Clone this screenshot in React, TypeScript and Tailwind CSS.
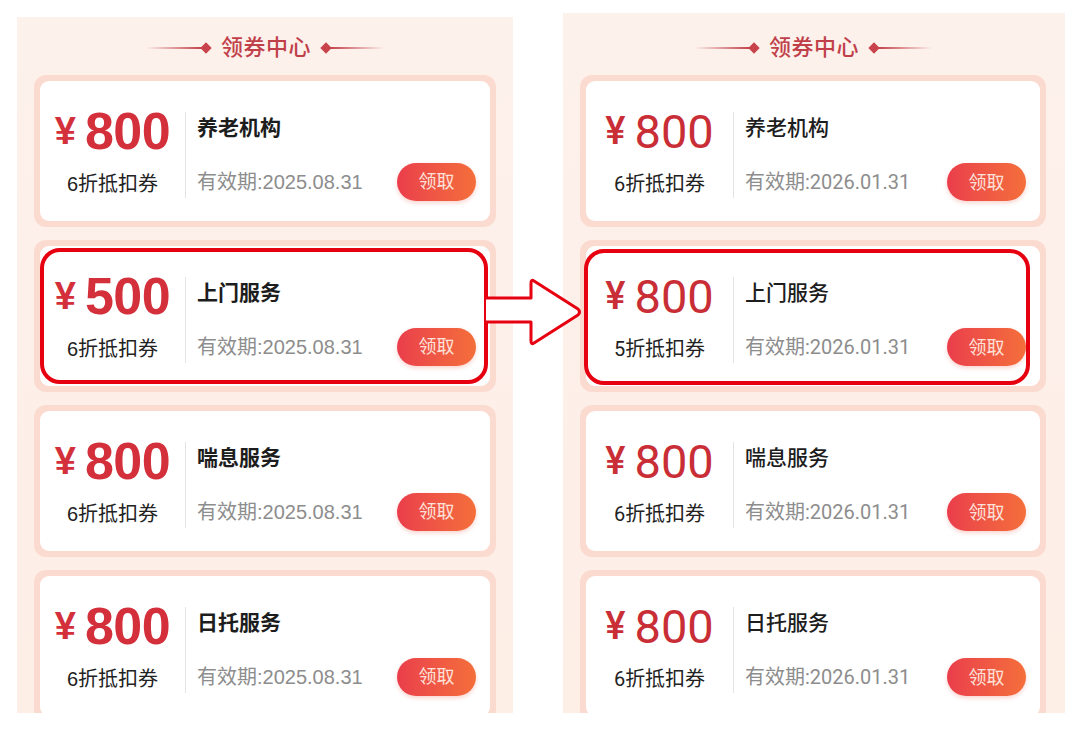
import React from 'react';

/* ─── Data ─── */

interface Coupon {
  price: number;
  discount: number;
  name: string;
  highlight?: boolean;
}

const before: Coupon[] = [
  { price: 800, discount: 6, name: '养老机构' },
  { price: 500, discount: 6, name: '上门服务', highlight: true },
  { price: 800, discount: 6, name: '喘息服务' },
  { price: 800, discount: 6, name: '日托服务' },
];

const after: Coupon[] = [
  { price: 800, discount: 6, name: '养老机构' },
  { price: 800, discount: 5, name: '上门服务', highlight: true },
  { price: 800, discount: 6, name: '喘息服务' },
  { price: 800, discount: 6, name: '日托服务' },
];

type Variant = 'old' | 'new';

/* ─── Pieces ─── */

function Title() {
  return (
    <div className="flex h-[40px] items-center justify-center">
      <div className="h-[2px] w-[56px] bg-linear-to-r from-transparent to-[#c2414a]" />
      <div className="h-[8px] w-[8px] rotate-45 bg-[#c8434b]" />
      <span className="mx-[11px] text-[22px] font-medium leading-none tracking-[0.5px] text-[#c0404a]">
        领券中心
      </span>
      <div className="h-[8px] w-[8px] rotate-45 bg-[#c8434b]" />
      <div className="h-[2px] w-[54px] bg-linear-to-r from-[#c2414a] to-transparent" />
    </div>
  );
}

function CouponCard({ coupon, date, variant }: { coupon: Coupon; date: string; variant: Variant }) {
  const isOld = variant === 'old';
  return (
    <div className="relative h-[152px] shrink-0 rounded-[12px] bg-[#fbdbcf] p-[6px]">
      <div className="flex h-full rounded-[9px] bg-white">
        {/* Left: amount */}
        <div className={`flex flex-col items-center pt-[26px] ${isOld ? 'w-[145px]' : 'w-[147px]'}`}>
          <div className={`flex h-[48px] items-center ${isOld ? 'text-[#d3303b]' : 'text-[#c92e37]'}`}>
            <span className={`mr-[9px] text-[38px] leading-none ${isOld ? 'font-bold' : 'font-medium'}`}>¥</span>
            <span
              className={
                isOld
                  ? 'text-[52px] font-bold leading-none tracking-[-0.5px]'
                  : 'text-[47px] font-normal leading-none'
              }
            >
              {coupon.price}
            </span>
          </div>
          <div className="mt-[17px] text-[20px] leading-[24px] text-[#222]">{coupon.discount}折抵扣券</div>
        </div>

        <div className="mt-[31px] h-[86px] w-px bg-[#e4e4e4]" />

        {/* Right: info */}
        <div className="flex flex-1 flex-col pl-[11px] pr-[14px] pt-[33px]">
          <div
            className={`text-[21px] leading-[28px] text-[#1d1d1d] ${isOld ? 'font-semibold' : 'font-medium'}`}
          >
            {coupon.name}
          </div>
          <div className="mt-[21px] flex items-center justify-between">
            <span className="text-[20px] text-[#8d8d8d]">有效期:{date}</span>
            <button className="flex h-[38px] w-[79px] items-center justify-center rounded-full bg-linear-to-r from-[#ea3d4b] to-[#f46e3a] text-[18px] text-[#fde2da] shadow-[0_2px_4px_rgba(230,80,60,0.25)]">
              领取
            </button>
          </div>
        </div>
      </div>

      {coupon.highlight && (
        <div
          className={`pointer-events-none absolute rounded-[20px] border-[4px] border-[#e60010] ${
            isOld ? 'bottom-[8px] left-[6px] right-[8px] top-[8px]' : 'bottom-[7px] left-[4px] right-[16px] top-[9px]'
          }`}
        />
      )}
    </div>
  );
}

function Panel({ coupons, date, variant }: { coupons: Coupon[]; date: string; variant: Variant }) {
  const isOld = variant === 'old';
  return (
    <div
      className={`overflow-hidden bg-linear-to-b from-[#fdf1ec] to-[#fdeee6] ${
        isOld
          ? 'mt-[17px] h-[696px] w-[496px] pl-[17px] pr-[17px] pt-[11px] font-["Liberation_Sans","Noto_Sans_CJK_SC",sans-serif]'
          : 'mt-[13px] h-[700px] w-[502px] pl-[17px] pr-[19px] pt-[15px] font-["Roboto","Noto_Sans_CJK_SC",sans-serif]'
      }`}
    >
      <Title />
      <div className="mt-[7px] flex flex-col gap-[13px]">
        {coupons.map((c) => (
          <CouponCard key={c.name} coupon={c} date={date} variant={variant} />
        ))}
      </div>
    </div>
  );
}

/* ─── Page ─── */

export default function App() {
  return (
    <div className="relative flex h-[744px] w-[1078px] gap-[50px] overflow-hidden bg-white pl-[17px]">
      <Panel coupons={before} date="2025.08.31" variant="old" />
      <Panel coupons={after} date="2026.01.31" variant="new" />

      {/* Arrow between the highlighted cards */}
      <svg className="absolute left-[480px] top-[274px]" width="106" height="76" viewBox="480 274 106 76">
        <path
          d="M486 298 L531 298 L531 283 Q531 279 534 281 L578 309 Q581 312 578 315 L534 343 Q531 345 531 341 L531 322 L486 322"
          fill="white"
          stroke="#e60010"
          strokeWidth="3"
          strokeLinejoin="round"
        />
      </svg>
    </div>
  );
}
